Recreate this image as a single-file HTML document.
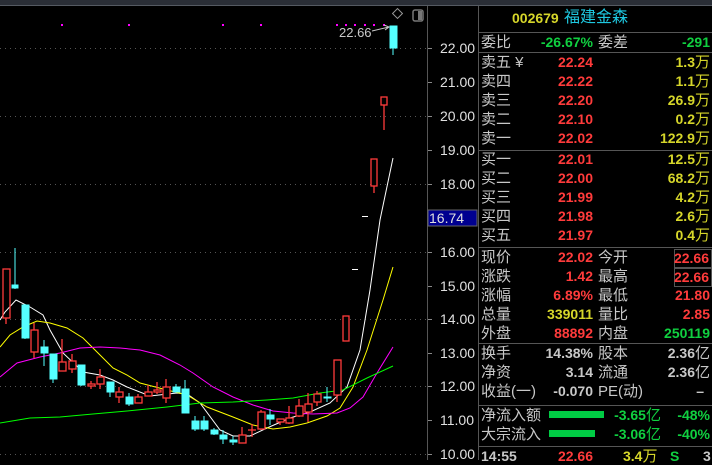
<!DOCTYPE html>
<html><head><meta charset="utf-8"><style>
html,body{margin:0;padding:0;background:#000;width:712px;height:460px;overflow:hidden}
#r{position:absolute;left:0;top:0;width:712px;height:460px}
.t{position:absolute;font-family:"Liberation Sans","Noto Sans CJK SC",sans-serif;font-size:15px;line-height:17px;white-space:nowrap}
.n{position:absolute;font-family:"Liberation Sans",sans-serif;font-size:14px;line-height:17px;white-space:nowrap;text-align:right;font-weight:bold}
.g{color:#c8c8c8}.rd{color:#ff3b3b}.y{color:#d6d62a}.gr{color:#10d040}.w{color:#e0e0e0}
</style></head><body><div id="r">
<svg width="712" height="460" style="position:absolute;left:0;top:0">
<rect x="0" y="0" width="712" height="5" fill="#2a2e36"/>
<line x1="0" y1="5.5" x2="712" y2="5.5" stroke="#555a62"/>
<g stroke="#555" stroke-dasharray="1,4">
<line x1="0" y1="48.5" x2="427" y2="48.5"/><line x1="0" y1="116.5" x2="427" y2="116.5"/><line x1="0" y1="184.5" x2="427" y2="184.5"/><line x1="0" y1="252.5" x2="427" y2="252.5"/><line x1="0" y1="319.5" x2="427" y2="319.5"/><line x1="0" y1="386.5" x2="427" y2="386.5"/><line x1="0" y1="454.5" x2="427" y2="454.5"/>
</g>
<line x1="427.5" y1="6" x2="427.5" y2="460" stroke="#555"/>
<line x1="478.5" y1="6" x2="478.5" y2="460" stroke="#555"/>
<g stroke="#888"><line x1="428" y1="48.5" x2="432" y2="48.5"/><line x1="428" y1="82.5" x2="432" y2="82.5"/><line x1="428" y1="116.5" x2="432" y2="116.5"/><line x1="428" y1="150.5" x2="432" y2="150.5"/><line x1="428" y1="184.5" x2="432" y2="184.5"/><line x1="428" y1="252.5" x2="432" y2="252.5"/><line x1="428" y1="286.5" x2="432" y2="286.5"/><line x1="428" y1="319.5" x2="432" y2="319.5"/><line x1="428" y1="353.5" x2="432" y2="353.5"/><line x1="428" y1="386.5" x2="432" y2="386.5"/><line x1="428" y1="420.5" x2="432" y2="420.5"/><line x1="428" y1="454.5" x2="432" y2="454.5"/></g>
<rect x="428" y="210" width="49" height="16" fill="#000090" stroke="#666"/>
<g fill="#8a8a8a"><rect x="394" y="10" width="7" height="7" transform="rotate(45 397.5 13.5)" fill="none" stroke="#999"/></g>
<rect x="413" y="10" width="10" height="11" rx="2" fill="none" stroke="#777" stroke-width="1.5"/><rect x="418" y="11" width="4" height="9" fill="#777"/>
<g fill="#ff00ff"><rect x="61" y="24" width="2" height="2"/><rect x="128" y="24" width="2" height="2"/><rect x="222" y="24" width="2" height="2"/><rect x="260" y="24" width="2" height="2"/><rect x="336" y="24" width="2" height="2"/><rect x="345" y="24" width="2" height="2"/><rect x="354" y="24" width="2" height="2"/><rect x="364" y="24" width="2" height="2"/><rect x="373" y="24" width="2" height="2"/><rect x="383" y="24" width="2" height="2"/></g>
<text x="339" y="37" font-family="Liberation Sans,sans-serif" font-size="13" fill="#c8c8c8">22.66</text>
<path d="M372 31 L389 27 M384 25 L389 27 L385 30" stroke="#c8c8c8" fill="none"/>
<!-- MA lines -->
<polyline fill="none" stroke="#ffffff" stroke-width="1" points="0,320 5,312 16,300 30,307 43,315 50,330 63,353 83,372 100,375 113,380 127,387 150,396 177,393 187,394 200,403 220,430 233,436 250,436 267,428 290,418 310,412 330,403 347,387 360,350 370,290 380,220 393,158"/>
<polyline fill="none" stroke="#ffff00" stroke-width="1" points="0,347 10,335 23,327 37,321 50,323 67,328 83,338 97,352 113,368 127,375 140,383 167,390 187,395 207,407 233,417 253,425 273,429 290,427 307,423 327,416 340,408 353,387 367,350 383,300 393,267"/>
<polyline fill="none" stroke="#ff00ff" stroke-width="1" points="0,377 17,363 40,357 60,353 80,348 100,347 120,348 140,350 160,355 180,365 193,373 213,387 233,397 253,405 273,411 293,413 313,414 337,413 350,408 363,397 377,373 393,347"/>
<polyline fill="none" stroke="#00ff00" stroke-width="1" points="0,423 30,418 60,417 93,414 127,411 167,407 200,403 233,402 267,400 293,398 320,393 343,390 367,378 393,366"/>
<!-- candles -->
<g stroke="#ff3b3b" fill="none" stroke-width="1.3">
<line x1="6" y1="318" x2="6" y2="324"/><rect x="3" y="269" width="7" height="49"/>
<line x1="34" y1="323" x2="34" y2="358"/><rect x="31" y="330" width="7" height="22" fill="#000"/>
<line x1="62" y1="339" x2="62" y2="371"/><rect x="59" y="362" width="7" height="9" fill="#000"/>
<line x1="72" y1="354" x2="72" y2="373"/><rect x="69" y="361" width="7" height="8" fill="#000"/>
<line x1="91" y1="381" x2="91" y2="389"/><rect x="88" y="384" width="7" height="2" fill="#000"/>
<line x1="100" y1="369" x2="100" y2="389"/><rect x="97" y="377" width="7" height="7" fill="#000"/>
<line x1="119" y1="387" x2="119" y2="403"/><rect x="116" y="392" width="7" height="5" fill="#000"/>
<line x1="138" y1="394" x2="138" y2="403"/><rect x="135" y="397" width="7" height="6" fill="#000"/>
<line x1="148" y1="385" x2="148" y2="396"/><rect x="145" y="392" width="7" height="4" fill="#000"/>
<line x1="157" y1="382" x2="157" y2="394"/><rect x="154" y="390" width="7" height="2" fill="#000"/>
<line x1="166" y1="379" x2="166" y2="403"/><rect x="163" y="387" width="7" height="11" fill="#000"/>
<line x1="242" y1="427" x2="242" y2="443"/><rect x="239" y="435" width="7" height="8" fill="#000"/>
<line x1="252" y1="424" x2="252" y2="437"/><line x1="248" y1="430" x2="256" y2="430"/>
<line x1="261" y1="410" x2="261" y2="430"/><rect x="258" y="412" width="7" height="17" fill="#000"/>
<line x1="280" y1="419" x2="280" y2="425"/><rect x="277" y="419" width="7" height="3" fill="#000"/>
<line x1="289" y1="406" x2="289" y2="424"/><rect x="286" y="418" width="7" height="5" fill="#000"/>
<line x1="299" y1="399" x2="299" y2="417"/><rect x="296" y="406" width="7" height="10" fill="#000"/>
<line x1="308" y1="393" x2="308" y2="422"/><rect x="305" y="404" width="7" height="8" fill="#000"/>
<line x1="317" y1="391" x2="317" y2="406"/><rect x="314" y="394" width="7" height="8" fill="#000"/>
<line x1="337" y1="395" x2="337" y2="402"/><rect x="334" y="360" width="7" height="35" fill="#000"/>
<rect x="343" y="316" width="6" height="25" fill="#000"/>
<line x1="374" y1="186" x2="374" y2="193"/><rect x="371" y="159" width="6" height="27" fill="#000"/>
<line x1="384" y1="105" x2="384" y2="130"/><rect x="381" y="97" width="6" height="8" fill="#000"/>
</g>
<g stroke="#ffffff"><line x1="352" y1="269.5" x2="358" y2="269.5"/><line x1="362" y1="216.5" x2="368" y2="216.5"/></g>
<g fill="#55ffff" stroke="#55ffff" stroke-width="1">
<line x1="15" y1="248" x2="15" y2="289"/><rect x="12" y="285" width="6" height="3"/>
<line x1="25" y1="304" x2="25" y2="339"/><rect x="22" y="305" width="7" height="33"/>
<line x1="44" y1="340" x2="44" y2="366"/><rect x="41" y="347" width="7" height="6"/>
<line x1="53" y1="354" x2="53" y2="383"/><rect x="50" y="354" width="7" height="25"/>
<line x1="81" y1="365" x2="81" y2="386"/><rect x="78" y="365" width="7" height="20"/>
<line x1="110" y1="382" x2="110" y2="397"/><rect x="107" y="382" width="7" height="10"/>
<line x1="129" y1="393" x2="129" y2="406"/><rect x="126" y="397" width="7" height="7"/>
<line x1="176" y1="384" x2="176" y2="392"/><rect x="173" y="387" width="7" height="5"/>
<line x1="185" y1="380" x2="185" y2="413"/><rect x="182" y="389" width="7" height="24"/>
<line x1="195" y1="416" x2="195" y2="431"/><rect x="192" y="421" width="7" height="8"/>
<line x1="204" y1="416" x2="204" y2="431"/><rect x="201" y="421" width="7" height="8"/>
<line x1="214" y1="428" x2="214" y2="435"/><rect x="211" y="430" width="7" height="4"/>
<line x1="223" y1="430" x2="223" y2="444"/><rect x="220" y="435" width="7" height="4"/>
<line x1="233" y1="436" x2="233" y2="445"/><rect x="230" y="440" width="7" height="2"/>
<line x1="270" y1="409" x2="270" y2="425"/><rect x="267" y="415" width="7" height="4"/>
<line x1="327" y1="387" x2="327" y2="402"/><rect x="324" y="397" width="7" height="1"/>
<line x1="393" y1="26" x2="393" y2="55"/><rect x="390" y="26" width="7" height="22"/>
</g>
<!-- right panel separators -->
<g stroke="#555"><line x1="479" y1="32.5" x2="712" y2="32.5"/><line x1="479" y1="52.5" x2="712" y2="52.5"/><line x1="479" y1="150.5" x2="712" y2="150.5"/><line x1="479" y1="247.5" x2="712" y2="247.5"/><line x1="479" y1="343.5" x2="712" y2="343.5"/><line x1="479" y1="405.5" x2="712" y2="405.5"/><line x1="479" y1="446.5" x2="712" y2="446.5"/></g>
<rect x="674.5" y="249.5" width="37" height="18" fill="none" stroke="#555"/>
<rect x="674.5" y="268.5" width="37" height="18" fill="none" stroke="#555"/>
<rect x="549" y="411" width="55" height="7" fill="#00cc44"/>
<rect x="549" y="430" width="46" height="7" fill="#00cc44"/>
</svg>
<div class="n w" style="left:429px;top:210px;text-align:left;font-weight:normal">16.74</div>
<div class="n w" style="left:440px;top:40px;font-weight:normal">22.00</div>
<div class="n w" style="left:440px;top:74px;font-weight:normal">21.00</div>
<div class="n w" style="left:440px;top:108px;font-weight:normal">20.00</div>
<div class="n w" style="left:440px;top:142px;font-weight:normal">19.00</div>
<div class="n w" style="left:440px;top:176px;font-weight:normal">18.00</div>
<div class="n w" style="left:440px;top:244px;font-weight:normal">16.00</div>
<div class="n w" style="left:440px;top:278px;font-weight:normal">15.00</div>
<div class="n w" style="left:440px;top:311px;font-weight:normal">14.00</div>
<div class="n w" style="left:440px;top:345px;font-weight:normal">13.00</div>
<div class="n w" style="left:440px;top:378px;font-weight:normal">12.00</div>
<div class="n w" style="left:440px;top:412px;font-weight:normal">11.00</div>
<div class="n w" style="left:440px;top:446px;font-weight:normal">10.00</div>

<div class="n y" style="left:512px;top:10px;text-align:left">002679</div>
<div class="t" style="left:564px;top:9px;color:#1ec8e0;font-size:16px">福建金森</div>

<div class="t g" style="left:481px;top:34px">委比</div><div class="n gr" style="right:119px;top:34px">-26.67%</div>
<div class="t g" style="left:598px;top:34px">委差</div><div class="n gr" style="right:2px;top:34px">-291</div>

<div class="t g" style="left:481px;top:54px">卖五 ¥</div><div class="n rd" style="right:119px;top:54px">22.24</div><div class="n y" style="right:2px;top:54px">1.3<span style="font-weight:normal;font-size:15px">万</span></div>
<div class="t g" style="left:481px;top:73px">卖四</div><div class="n rd" style="right:119px;top:73px">22.22</div><div class="n y" style="right:2px;top:73px">1.1<span style="font-weight:normal;font-size:15px">万</span></div>
<div class="t g" style="left:481px;top:92px">卖三</div><div class="n rd" style="right:119px;top:92px">22.20</div><div class="n y" style="right:2px;top:92px">26.9<span style="font-weight:normal;font-size:15px">万</span></div>
<div class="t g" style="left:481px;top:111px">卖二</div><div class="n rd" style="right:119px;top:111px">22.10</div><div class="n y" style="right:2px;top:111px">0.2<span style="font-weight:normal;font-size:15px">万</span></div>
<div class="t g" style="left:481px;top:130px">卖一</div><div class="n rd" style="right:119px;top:130px">22.02</div><div class="n y" style="right:2px;top:130px">122.9<span style="font-weight:normal;font-size:15px">万</span></div>

<div class="t g" style="left:481px;top:151px">买一</div><div class="n rd" style="right:119px;top:151px">22.01</div><div class="n y" style="right:2px;top:151px">12.5<span style="font-weight:normal;font-size:15px">万</span></div>
<div class="t g" style="left:481px;top:170px">买二</div><div class="n rd" style="right:119px;top:170px">22.00</div><div class="n y" style="right:2px;top:170px">68.2<span style="font-weight:normal;font-size:15px">万</span></div>
<div class="t g" style="left:481px;top:189px">买三</div><div class="n rd" style="right:119px;top:189px">21.99</div><div class="n y" style="right:2px;top:189px">4.2<span style="font-weight:normal;font-size:15px">万</span></div>
<div class="t g" style="left:481px;top:208px">买四</div><div class="n rd" style="right:119px;top:208px">21.98</div><div class="n y" style="right:2px;top:208px">2.6<span style="font-weight:normal;font-size:15px">万</span></div>
<div class="t g" style="left:481px;top:227px">买五</div><div class="n rd" style="right:119px;top:227px">21.97</div><div class="n y" style="right:2px;top:227px">0.4<span style="font-weight:normal;font-size:15px">万</span></div>

<div class="t g" style="left:481px;top:249px">现价</div><div class="n rd" style="right:119px;top:249px">22.02</div><div class="t g" style="left:598px;top:249px">今开</div><div class="n rd" style="right:3px;top:250px">22.66</div>
<div class="t g" style="left:481px;top:268px">涨跌</div><div class="n rd" style="right:119px;top:268px">1.42</div><div class="t g" style="left:598px;top:268px">最高</div><div class="n rd" style="right:3px;top:269px">22.66</div>
<div class="t g" style="left:481px;top:287px">涨幅</div><div class="n rd" style="right:119px;top:287px">6.89%</div><div class="t g" style="left:598px;top:287px">最低</div><div class="n rd" style="right:2px;top:287px">21.80</div>
<div class="t g" style="left:481px;top:306px">总量</div><div class="n y" style="right:119px;top:306px">339011</div><div class="t g" style="left:598px;top:306px">量比</div><div class="n rd" style="right:2px;top:306px">2.85</div>
<div class="t g" style="left:481px;top:325px">外盘</div><div class="n rd" style="right:119px;top:325px">88892</div><div class="t g" style="left:598px;top:325px">内盘</div><div class="n gr" style="right:2px;top:325px">250119</div>

<div class="t g" style="left:481px;top:345px">换手</div><div class="n g" style="right:119px;top:345px">14.38%</div><div class="t g" style="left:598px;top:345px">股本</div><div class="n g" style="right:2px;top:345px">2.36<span style="font-weight:normal;font-size:15px">亿</span></div>
<div class="t g" style="left:481px;top:364px">净资</div><div class="n g" style="right:119px;top:364px">3.14</div><div class="t g" style="left:598px;top:364px">流通</div><div class="n g" style="right:2px;top:364px">2.36<span style="font-weight:normal;font-size:15px">亿</span></div>
<div class="t g" style="left:481px;top:383px">收益(一)</div><div class="n g" style="right:119px;top:383px">-0.070</div><div class="t g" style="left:598px;top:383px">PE(动)</div><div class="n g" style="right:8px;top:383px">–</div>

<div class="t g" style="left:481px;top:407px">净流入额</div><div class="n gr" style="right:51px;top:407px">-3.65<span style="font-weight:normal;font-size:15px">亿</span></div><div class="n gr" style="right:2px;top:407px">-48%</div>
<div class="t g" style="left:481px;top:426px">大宗流入</div><div class="n gr" style="right:51px;top:426px">-3.06<span style="font-weight:normal;font-size:15px">亿</span></div><div class="n gr" style="right:2px;top:426px">-40%</div>

<div class="n g" style="left:481px;top:448px;text-align:left">14:55</div>
<div class="n rd" style="right:119px;top:448px">22.66</div>
<div class="n y" style="left:623px;top:448px;text-align:left">3.4<span style="font-weight:normal;font-size:15px">万</span></div>
<div class="n gr" style="left:670px;top:448px;text-align:left">S</div>
<div class="n g" style="left:703px;top:448px;text-align:left">3</div>
</div></body></html>
